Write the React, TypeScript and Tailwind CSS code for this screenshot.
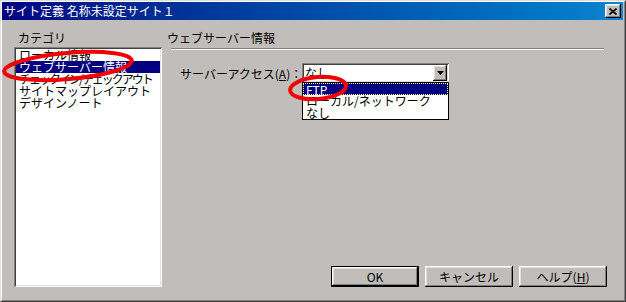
import React from "react";

const raised =
  "shadow-[inset_-1px_-1px_#000,inset_1px_1px_#fff,inset_-2px_-2px_#808080,inset_2px_2px_#dfdfdf]";
const sunken =
  "shadow-[inset_1px_1px_#808080,inset_-1px_-1px_#fff,inset_2px_2px_#404040,inset_-2px_-2px_#dfdfdf]";

const categories = [
  "ローカル情報",
  "ウェブサーバー情報",
  "チェックイン/チェックアウト",
  "サイトマップレイアウト",
  "デザインノート",
];

function Btn({ children, def }: { children: React.ReactNode; def?: boolean }) {
  return (
    <div className={def ? "w-[88px] h-[21px] border border-black" : "w-[88px] h-[21px]"}>
      <div className={`w-full h-full flex items-center justify-center bg-[#c0bdba] ${raised}`}>
        {children}
      </div>
    </div>
  );
}

export default function App() {
  return (
    <div className="relative w-[626px] h-[302px] flex flex-col bg-[#c0bdba] text-[12px] leading-[12px] text-black font-['Noto_Sans_CJK_JP',sans-serif] border border-t-[#dfdfdf] border-l-[#dfdfdf] border-r-[#404040] border-b-[#404040]">
      <div className="flex-1 flex flex-col border border-t-white border-l-white border-r-[#808080] border-b-[#808080]">
        {/* title bar */}
        <div className="h-[18px] mr-px flex items-center justify-between bg-linear-to-r from-[#000080] to-[#1084d0]">
          <span className="pl-[2px] text-white">サイト定義 名称未設定サイト１</span>
          <div className={`mr-[2px] w-[16px] h-[14px] flex items-center justify-center bg-[#c0bdba] ${raised}`}>
            <svg width="8" height="7" viewBox="0 0 8 7">
              <path d="M0.5 0.5 L7.5 6.5 M7.5 0.5 L0.5 6.5" stroke="#000" strokeWidth="1.6" />
            </svg>
          </div>
        </div>

        {/* body */}
        <div className="flex-1 flex pl-[12px] pr-[17px] pt-[12px] pb-[13px] gap-[5px]">
          {/* categories */}
          <div className="w-[148px] flex flex-col">
            <div className="pl-[4px] h-[12px]">カテゴリ</div>
            <div className={`mt-[3px] flex-1 bg-white p-[2px] overflow-hidden ${sunken}`}>
              {categories.map((c, i) => (
                <div
                  key={c}
                  className={
                    i === 1
                      ? "h-[12px] pl-[3px] whitespace-nowrap bg-[#000080] text-white"
                      : i === 2
                      ? "h-[12px] pl-[3px] whitespace-nowrap tracking-[-2px]"
                      : "h-[12px] pl-[3px] whitespace-nowrap"
                  }
                >
                  {c}
                </div>
              ))}
            </div>
          </div>

          {/* web server info */}
          <div className="flex-1 flex flex-col">
            <div className="h-[12px]">ウェブサーバー情報</div>
            <div className="mt-[4px] ml-[4px] mr-[3px] h-[2px] border-t border-b border-t-[#808080] border-b-white" />
            <div className="mt-[13px] pl-[13px] flex items-start">
              <div className="w-[122px] mt-[5px] whitespace-nowrap">
                サーバーアクセス(<span className="underline">A</span>)：
              </div>
              <div className="relative">
                <div className={`w-[147px] h-[20px] bg-white p-[2px] flex items-center justify-between ${sunken}`}>
                  <span className="pl-[1px]">なし</span>
                  <div className={`w-[14px] h-[16px] flex items-center justify-center bg-[#c0bdba] ${raised}`}>
                    <svg width="7" height="4" viewBox="0 0 7 4">
                      <path d="M0 0 H7 L3.5 4 Z" fill="#000" />
                    </svg>
                  </div>
                </div>
                <div className="absolute left-0 top-[19px] w-[147px] bg-white border border-black">
                  <div className="h-[12px] bg-[#000080] text-white border border-dotted border-[#ffff80] pl-[2px]">
                    FTP
                  </div>
                  <div className="h-[12px] pl-[3px] whitespace-nowrap">ローカル/ネットワーク</div>
                  <div className="h-[12px] pl-[3px]">なし</div>
                </div>
              </div>
            </div>
            <div className="mt-auto flex justify-end gap-[6px]">
              <Btn def>OK</Btn>
              <Btn>キャンセル</Btn>
              <Btn>
                ヘルプ(<span className="underline">H</span>)
              </Btn>
            </div>
          </div>
        </div>
      </div>

      {/* red annotation marks */}
      <svg className="absolute -left-px -top-px pointer-events-none" width="626" height="302">
        <ellipse cx="68" cy="66" rx="64" ry="13" fill="none" stroke="#f00000" strokeWidth="4" transform="rotate(-5 68 66)" />
        <ellipse cx="318" cy="88" rx="28" ry="11" fill="none" stroke="#f00000" strokeWidth="4" transform="rotate(-5 318 88)" />
      </svg>
    </div>
  );
}
